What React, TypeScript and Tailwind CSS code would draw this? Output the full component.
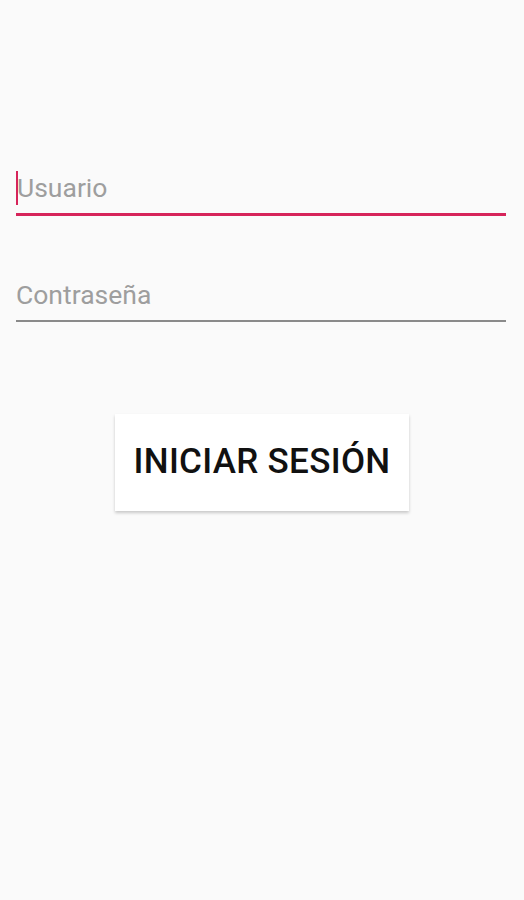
import React from 'react';

const App: React.FC = () => {
  return (
    <div className="min-h-[900px] w-full bg-[#fafafa] font-['Roboto',sans-serif]">
      <div className="flex flex-col pl-4 pr-[18px] pt-[167px]">
        <div className="relative flex h-[49px] items-center border-b-[3px] border-[#d6245a] pb-[4px]">
          <span className="h-[34px] w-[2px] shrink-0 bg-[#d6245a]" />
          <span className="-ml-[1px] text-[26.5px] leading-none text-[#9e9e9e]">Usuario</span>
        </div>
        <div className="mt-[59px] flex h-[47px] items-center border-b-2 border-[#8a8a8a] pb-[4px]">
          <span className="text-[26.5px] leading-none text-[#9e9e9e]">Contraseña</span>
        </div>
      </div>
      <div className="mt-[92px] flex justify-center">
        <button
          type="button"
          className="h-[97px] w-[294px] bg-white text-[35px] font-medium tracking-[0.3px] text-[#111] shadow-[0_2px_3px_rgba(0,0,0,0.2)]"
        >
          INICIAR SESIÓN
        </button>
      </div>
    </div>
  );
};

export default App;
